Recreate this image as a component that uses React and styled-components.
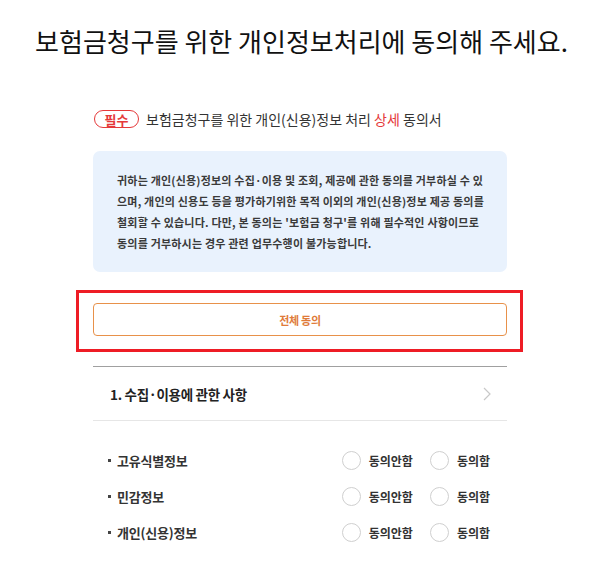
import React from "react";
import styled, { createGlobalStyle } from "styled-components";

const GlobalStyle = createGlobalStyle`
  html, body {
    margin: 0;
    padding: 0;
    background: #fff;
  }
  body {
    font-family: "Noto Sans CJK KR", "Noto Sans", sans-serif;
    color: #222;
  }
`;

const items = ["고유식별정보", "민감정보", "개인(신용)정보"];

const App = () => {
  return (
    <Page>
      <GlobalStyle />
      <Title>보험금청구를 위한 개인정보처리에 동의해 주세요.</Title>
      <Section>
        <Heading>
          <Badge>필수</Badge>
          <HeadingText>
            보험금청구를 위한 개인(신용)정보 처리 <Accent>상세</Accent> 동의서
          </HeadingText>
        </Heading>
        <Notice>
          귀하는 개인(신용)정보의 수집·이용 및 조회, 제공에 관한 동의를 거부하실 수 있으며,
          개인의 신용도 등을 평가하기위한 목적 이외의 개인(신용)정보 제공 동의를 철회할 수
          있습니다. 다만, 본 동의는 '보험금 청구'를 위해 필수적인 사항이므로 동의를 거부하시는
          경우 관련 업무수행이 불가능합니다.
        </Notice>
        <ButtonWrap>
          <AllButton type="button">전체 동의</AllButton>
          <Highlight />
        </ButtonWrap>
        <Accordion>
          <AccordionTitle>1. 수집·이용에 관한 사항</AccordionTitle>
          <svg width="8" height="14" viewBox="0 0 8 14">
            <path d="M1 1l6 6-6 6" fill="none" stroke="#c8c8c8" strokeWidth="1.2" />
          </svg>
        </Accordion>
        <ConsentList>
          {items.map((item) => (
            <ConsentRow key={item}>
              <ConsentLabel>{item}</ConsentLabel>
              <Choices>
                <Choice>
                  <Circle />
                  <ChoiceText>동의안함</ChoiceText>
                </Choice>
                <Choice>
                  <Circle />
                  <ChoiceText>동의함</ChoiceText>
                </Choice>
              </Choices>
            </ConsentRow>
          ))}
        </ConsentList>
      </Section>
    </Page>
  );
};

const Page = styled.div`
  width: 603px;
  padding-top: 24px;
  box-sizing: border-box;
`;

const Title = styled.h1`
  margin: 0;
  text-align: center;
  font-size: 26px;
  line-height: 34px;
  font-weight: 400;
  color: #111;
`;

const Section = styled.div`
  width: 414px;
  margin: 52px 0 0 93px;
`;

const Heading = styled.div`
  display: flex;
  align-items: center;
  height: 18px;
  margin-left: 1px;
`;

const Badge = styled.span`
  display: inline-flex;
  align-items: center;
  justify-content: center;
  width: 45px;
  height: 18px;
  box-sizing: border-box;
  border: 1px solid #e5393a;
  border-radius: 9px;
  color: #e5393a;
  font-size: 13px;
  font-weight: 700;
`;

const HeadingText = styled.span`
  margin-left: 7px;
  font-size: 14px;
  color: #333;
`;

const Accent = styled.span`
  color: #e5393a;
`;

const Notice = styled.p`
  margin: 23px 0 0;
  padding: 19px 22px 18px 24px;
  background: #e9f2fd;
  border-radius: 7px;
  font-size: 11px;
  line-height: 21px;
  font-weight: 700;
  letter-spacing: 0.2px;
  color: #3a3a3a;
  word-break: break-all;
`;

const ButtonWrap = styled.div`
  position: relative;
  margin-top: 31px;
`;

const AllButton = styled.button`
  display: block;
  width: 100%;
  height: 33px;
  background: #fff;
  border: 1px solid #e8914a;
  border-radius: 4px;
  color: #e07b3a;
  font-family: inherit;
  font-size: 11px;
  font-weight: 700;
  letter-spacing: -0.3px;
  cursor: pointer;
`;

const Highlight = styled.div`
  position: absolute;
  top: -13px;
  bottom: -16px;
  left: -17px;
  right: -16px;
  border: 3px solid #ee1c25;
  pointer-events: none;
`;

const Accordion = styled.div`
  display: flex;
  align-items: center;
  justify-content: space-between;
  height: 53px;
  margin-top: 30px;
  padding: 0 16px 0 17px;
  border-top: 1px solid #a0a0a0;
  border-bottom: 1px solid #e6e6e6;
`;

const AccordionTitle = styled.span`
  font-size: 13.5px;
  font-weight: 700;
  letter-spacing: -0.3px;
  color: #222;
`;

const ConsentList = styled.ul`
  list-style: none;
  margin: 0;
  padding: 21px 17px 0 15px;
`;

const ConsentRow = styled.li`
  display: flex;
  align-items: center;
  justify-content: space-between;
  height: 36px;
`;

const ConsentLabel = styled.span`
  display: flex;
  align-items: center;
  font-size: 13px;
  font-weight: 700;
  letter-spacing: -0.2px;
  color: #333;

  &::before {
    content: "";
    width: 3px;
    height: 3px;
    margin-right: 6px;
    background: #444;
  }
`;

const Choices = styled.div`
  display: flex;
  align-items: center;
  gap: 17px;
`;

const Choice = styled.label`
  display: flex;
  align-items: center;
  gap: 8px;
`;

const Circle = styled.span`
  width: 19px;
  height: 19px;
  box-sizing: border-box;
  border: 1px solid #cfcfcf;
  border-radius: 50%;
  background: #fff;
`;

const ChoiceText = styled.span`
  font-size: 12px;
  font-weight: 700;
  color: #333;
`;

export default App;
